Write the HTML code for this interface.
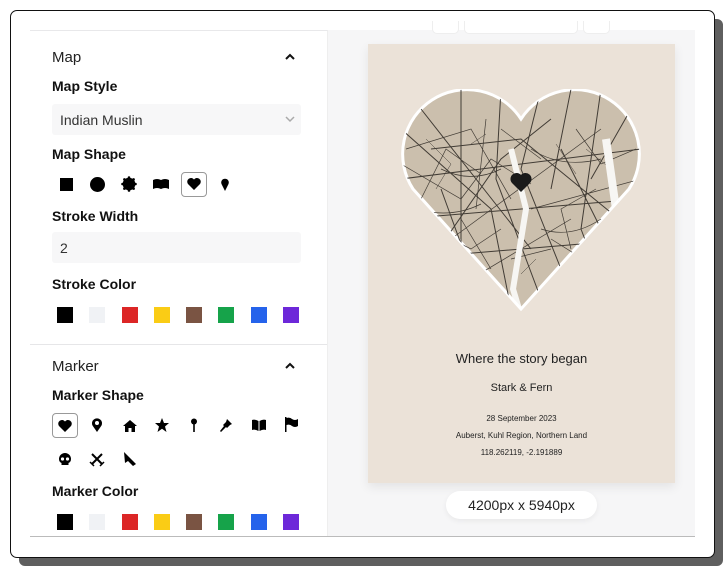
<!DOCTYPE html><html><head><style>
*{margin:0;padding:0;box-sizing:border-box}
body{width:724px;height:567px;background:#fff;font-family:"Liberation Sans",sans-serif;position:relative;overflow:hidden}
.shadow{position:absolute;left:19px;top:19px;width:704px;height:547px;background:#5f5f5f;border-radius:6px}
.frame{position:absolute;left:10px;top:10px;width:705px;height:548px;background:#fff;border:1.5px solid #111;border-radius:7px;overflow:hidden}
.left{position:absolute;left:19px;top:19px;width:298px;height:507px;background:#fff;border-top:1px solid #e8e8ea;border-right:1px solid #eee}
.right{position:absolute;left:317px;top:19px;width:367px;height:507px;background:#f6f6f7}
.bottomline{position:absolute;left:19px;top:525px;width:665px;height:1px;background:#bbb}
.sec{position:absolute;left:22px;font-size:15px;color:#222}
.lbl{position:absolute;left:22px;font-size:14px;font-weight:bold;color:#111}
.chev{position:absolute;left:255px;width:10px;height:10px}
.input{position:absolute;left:22px;width:249px;height:31px;background:#f7f7f8;border-radius:3px;font-size:14px;color:#333;padding:8px 8px}
.sw{position:absolute;width:16px;height:16px}
.ico{position:absolute;width:16px;height:16px}
.sel{position:absolute;width:26px;height:25px;border:1px solid #999;border-radius:4px}
.poster{position:absolute;left:357px;top:33px;width:307px;height:439px;background:#ebe2d8;box-shadow:0 4px 10px rgba(0,0,0,.08)}
.pt{position:absolute;width:100%;text-align:center;color:#222}
.dim{position:absolute;left:435px;top:480px;width:151px;height:28px;background:#fff;border-radius:14px;font-size:14px;text-align:center;line-height:28px;color:#222;box-shadow:0 2px 6px rgba(0,0,0,.06)}
.tb{position:absolute;top:10px;height:13px;background:#fff;border:1px solid #eee;border-top:none;border-radius:0 0 5px 5px}
</style></head><body>
<div class="shadow"></div>
<div class="frame">
<div class="right"></div>
<div class="tb" style="left:421px;width:27px"></div>
<div class="tb" style="left:453px;width:114px"></div>
<div class="tb" style="left:572px;width:27px"></div>
<div class="left">
 <div class="sec" style="top:18px">Map</div>
 <svg class="chev" style="top:21px" viewBox="0 0 10 10"><path d="M1 7L5 3L9 7" stroke="#111" stroke-width="2" fill="none"/></svg>
 <div class="lbl" style="top:47px">Map Style</div>
 <div class="input" style="top:73px">Indian Muslin<svg style="position:absolute;right:6px;top:12px" width="10" height="7" viewBox="0 0 10 7"><path d="M1 1L5 5L9 1" stroke="#aaa" stroke-width="1.5" fill="none"/></svg></div>
 <div class="lbl" style="top:115px">Map Shape</div>
 <div class="ico" style="left:28px;top:145px"><div style="width:13px;height:13px;background:#000;margin:1.5px"></div></div>
 <div class="ico" style="left:59px;top:145px"><div style="width:15px;height:15px;background:#000;border-radius:50%;margin:.5px"></div></div>
 <svg class="ico" style="left:91px;top:145px" viewBox="0 0 16 16"><circle cx="8" cy="8" r="6.3" fill="#000"/><g fill="#000"><circle cx="8" cy="1.5" r="1.3"/><circle cx="8" cy="14.5" r="1.3"/><circle cx="1.5" cy="8" r="1.3"/><circle cx="14.5" cy="8" r="1.3"/><circle cx="3.4" cy="3.4" r="1.3"/><circle cx="12.6" cy="3.4" r="1.3"/><circle cx="3.4" cy="12.6" r="1.3"/><circle cx="12.6" cy="12.6" r="1.3"/></g></svg>
 <svg class="ico" style="left:123px;top:145px" viewBox="0 0 16 16"><path d="M0 4Q4 2 8 4Q12 2 16 4V13Q12 11 8 13Q4 11 0 13Z" fill="#000"/></svg>
 <div class="sel" style="left:151px;top:141px"></div>
 <svg class="ico" style="left:156px;top:145px" viewBox="0 0 16 16"><path d="M8 14L2 8A3.3 3.3 0 0 1 8 3.5A3.3 3.3 0 0 1 14 8Z" fill="#000"/></svg>
 <svg class="ico" style="left:187px;top:145px" viewBox="0 0 16 16"><path d="M8 15L4.5 8A3.8 3.8 0 1 1 11.5 8Z" fill="#000"/></svg>
 <div class="lbl" style="top:177px">Stroke Width</div>
 <div class="input" style="top:201px">2</div>
 <div class="lbl" style="top:245px">Stroke Color</div>
 <div class="sw" style="left:27px;top:276px;background:#000"></div>
 <div class="sw" style="left:59px;top:276px;background:#f0f2f5"></div>
 <div class="sw" style="left:92px;top:276px;background:#dc2626"></div>
 <div class="sw" style="left:124px;top:276px;background:#facc15"></div>
 <div class="sw" style="left:156px;top:276px;background:#7a5443"></div>
 <div class="sw" style="left:188px;top:276px;background:#16a34a"></div>
 <div class="sw" style="left:221px;top:276px;background:#2563eb"></div>
 <div class="sw" style="left:253px;top:276px;background:#6d28d9"></div>
 <div style="position:absolute;left:0;top:313px;width:297px;height:1px;background:#e6e6e8"></div>
 <div class="sec" style="top:327px">Marker</div>
 <svg class="chev" style="top:330px" viewBox="0 0 10 10"><path d="M1 7L5 3L9 7" stroke="#111" stroke-width="2" fill="none"/></svg>
 <div class="lbl" style="top:356px">Marker Shape</div>
 <div class="sel" style="left:22px;top:382px"></div>
 <svg class="ico" style="left:27px;top:387px" viewBox="0 0 16 16"><path d="M8 14L2 8A3.3 3.3 0 0 1 8 3.5A3.3 3.3 0 0 1 14 8Z" fill="#000"/></svg>
 <svg class="ico" style="left:59px;top:386px" viewBox="0 0 16 16"><path d="M8 15L3.5 8.5A5 5 0 1 1 12.5 8.5Z" fill="#000"/><circle cx="8" cy="6" r="2" fill="#fff"/></svg>
 <svg class="ico" style="left:92px;top:387px" viewBox="0 0 16 16"><path d="M8 2L1 8H3V14H6.5V10H9.5V14H13V8H15Z" fill="#000"/></svg>
 <svg class="ico" style="left:124px;top:386px" viewBox="0 0 16 16"><path d="M8 1L10 6H15L11 9.5L12.5 15L8 11.7L3.5 15L5 9.5L1 6H6Z" fill="#000"/></svg>
 <svg class="ico" style="left:156px;top:386px" viewBox="0 0 16 16"><circle cx="8" cy="4.5" r="3" fill="#000"/><rect x="7.2" y="6" width="1.6" height="9" fill="#000"/></svg>
 <svg class="ico" style="left:188px;top:386px" viewBox="0 0 16 16"><path d="M9 2L14 7L12 8L9 11L8 10L3 15L2 14L6 9L5 8L8 5Z" fill="#000"/></svg>
 <svg class="ico" style="left:221px;top:386px" viewBox="0 0 16 16"><path d="M1 3Q4 2 7.5 4V14Q4 12 1 13ZM15 3Q12 2 8.5 4V14Q12 12 15 13Z" fill="#000"/></svg>
 <svg class="ico" style="left:253px;top:385px" viewBox="0 0 16 16"><path d="M2 1H3.5V16H2Z M3.5 2Q7 1 9 3Q12 5 15 3V10Q12 12 9 10Q7 8 3.5 9Z" fill="#000"/></svg>
 <svg class="ico" style="left:27px;top:420px" viewBox="0 0 16 16"><path d="M8 2A6 6 0 0 0 2 8Q2 11 4.5 12V14H11.5V12Q14 11 14 8A6 6 0 0 0 8 2Z" fill="#000"/><circle cx="5.5" cy="8" r="1.6" fill="#fff"/><circle cx="10.5" cy="8" r="1.6" fill="#fff"/></svg>
 <svg class="ico" style="left:59px;top:420px" viewBox="0 0 16 16"><path d="M3 3L13 13M13 3L3 13" stroke="#000" stroke-width="2"/><path d="M1 11L5 15M11 15L15 11" stroke="#000" stroke-width="1.5"/></svg>
 <svg class="ico" style="left:92px;top:420px" viewBox="0 0 16 16"><path d="M2 1L14 13L11 15L6 10L3 12Z" fill="#000"/></svg>
 <div class="lbl" style="top:452px">Marker Color</div>
 <div class="sw" style="left:27px;top:483px;background:#000"></div>
 <div class="sw" style="left:59px;top:483px;background:#f0f2f5"></div>
 <div class="sw" style="left:92px;top:483px;background:#dc2626"></div>
 <div class="sw" style="left:124px;top:483px;background:#facc15"></div>
 <div class="sw" style="left:156px;top:483px;background:#7a5443"></div>
 <div class="sw" style="left:188px;top:483px;background:#16a34a"></div>
 <div class="sw" style="left:221px;top:483px;background:#2563eb"></div>
 <div class="sw" style="left:253px;top:483px;background:#6d28d9"></div>
</div>
<div class="poster">
 <svg style="position:absolute;left:33px;top:45px" width="240" height="222" viewBox="0 0 240 222">
  <defs><clipPath id="h"><path d="M120 220L12 100A58 58 0 0 1 120 30A58 58 0 0 1 228 100Z"/></clipPath></defs>
  <path d="M120 220L12 100A58 58 0 0 1 120 30A58 58 0 0 1 228 100Z" fill="#cbbfad" stroke="#fff" stroke-width="3"/>
  <g clip-path="url(#h)" stroke="#2a2520" stroke-width="1" fill="none" opacity=".85">
   <path d="M0 40L90 120L110 220M20 20L130 160M60 0L60 220M100 0L95 90L140 210M140 0L120 80L160 180M170 0L150 100M200 0L180 140L210 220M230 20L190 90M0 90L240 60M0 130L240 110M0 170L240 150M30 60L120 50L230 140M10 200L100 70L150 30M160 60L230 200M40 100L80 210"/>
   <path d="M5 60L70 40L110 110M50 150L200 40M130 120L240 90M70 190L170 130M0 75L60 110L90 70L130 95M20 110L45 60L80 85M150 150L190 175L220 120M175 40L200 75L235 60M30 140L70 160L100 140M85 30L75 120M195 100L160 120L170 160M110 170L150 160M40 80Q70 95 100 80M130 60Q160 80 200 70M15 120Q50 130 80 115M140 140Q170 150 200 130M100 40L140 70M60 130L90 180" stroke-width=".7"/>
   <path d="M25 50L50 75L35 100M210 80L185 60M70 55L85 45M120 185L135 170M155 55L175 85" stroke-width=".5"/>
   <path d="M110 60L125 120L112 200L118 220" stroke="#fff" stroke-width="6"/>
   <path d="M205 50L215 120L228 140" stroke="#fff" stroke-width="8"/>
  </g>
  <path d="M120 103L111 94A5.5 5.5 0 0 1 120 86A5.5 5.5 0 0 1 129 94Z" fill="#1a1a1a"/>
 </svg>
 <div class="pt" style="top:307px;font-size:13px">Where the story began</div>
 <div class="pt" style="top:338px;font-size:11px">Stark &amp; Fern</div>
 <div class="pt" style="top:370px;font-size:8px">28 September 2023</div>
 <div class="pt" style="top:387px;font-size:8px">Auberst, Kuhl Region, Northern Land</div>
 <div class="pt" style="top:404px;font-size:8px">118.262119, -2.191889</div>
</div>
<div class="dim">4200px x 5940px</div>
<div class="bottomline"></div>
</div>
</body></html>
